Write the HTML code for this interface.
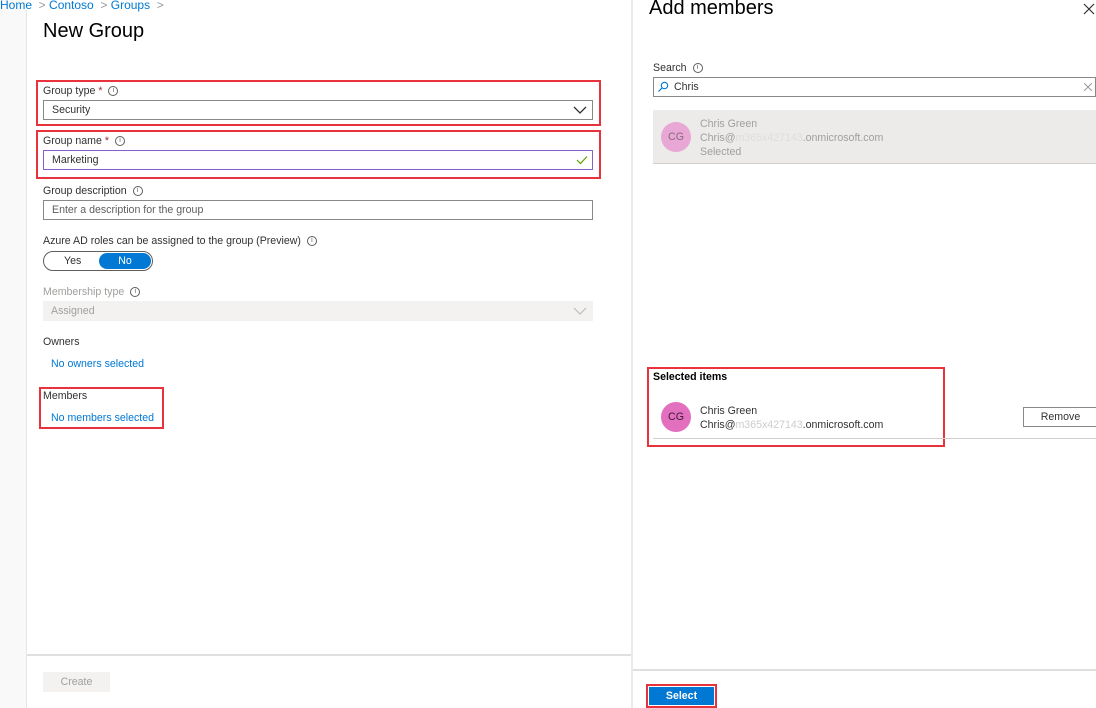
<!DOCTYPE html>
<html><head><meta charset="utf-8"><style>
*{box-sizing:border-box;margin:0;padding:0}
body{width:1096px;height:708px;position:relative;overflow:hidden;background:#fff;font-family:"Liberation Sans",sans-serif;font-size:10.6px;color:#323130}
.a{position:absolute}
.lbl{position:absolute;font-size:10.6px;color:#323130}
.inp{position:absolute;left:43px;width:550px;height:20px;border:1px solid #8a8886;padding:0 8px;line-height:18px;font-size:10.6px}
.red{position:absolute;border:2px solid #e8323c}
.info{display:inline-block;width:10px;height:10px;border:1px solid #605e5c;border-radius:50%;font-size:7px;line-height:8px;text-align:center;vertical-align:middle;margin-left:6px;color:#605e5c}
.link{position:absolute;color:#0078d4;font-size:10.6px}
</style></head><body>
<div class="a" style="left:0;top:0;width:26px;height:708px;background:#f9f9f9"></div>
<div class="a" style="left:26px;top:10px;width:1px;height:698px;background:#e6e6e6"></div>
<div class="a" style="left:0;top:-2px;font-size:12px;color:#0078d4">Home <span style="color:#999">&nbsp;&gt;&nbsp;</span>Contoso <span style="color:#999">&nbsp;&gt;&nbsp;</span>Groups <span style="color:#999">&nbsp;&gt;</span></div>
<div class="a" style="left:43px;top:20px;font-size:20px;color:#000">New Group</div>

<div class="red" style="left:36px;top:80px;width:565px;height:46px"></div>
<div class="lbl" style="left:43px;top:85px">Group type <span style="color:#a4262c">*</span><span class="info">i</span></div>
<div class="inp" style="top:100px">Security</div>
<svg class="a" style="left:573px;top:105px" width="14" height="10"><path d="M1 2 L7 8 L13 2" fill="none" stroke="#323130" stroke-width="1.3"/></svg>

<div class="red" style="left:36px;top:130px;width:565px;height:49px"></div>
<div class="lbl" style="left:43px;top:135px">Group name <span style="color:#a4262c">*</span><span class="info">i</span></div>
<div class="inp" style="top:150px;border-color:#8a5ec9">Marketing</div>
<svg class="a" style="left:576px;top:155px" width="12" height="10"><path d="M1 5 L4.5 8.5 L11 1.5" fill="none" stroke="#57a300" stroke-width="1.2"/></svg>

<div class="lbl" style="left:43px;top:185px">Group description<span class="info">i</span></div>
<div class="inp" style="top:200px;color:#605e5c">Enter a description for the group</div>

<div class="lbl" style="left:43px;top:235px">Azure AD roles can be assigned to the group (Preview)<span class="info">i</span></div>
<div class="a" style="left:43px;top:251px;width:110px;height:20px;border:1px solid #605e5c;border-radius:10px"></div>
<div class="a" style="left:64px;top:255px">Yes</div>
<div class="a" style="left:99px;top:253px;width:52px;height:16px;border-radius:8px;background:#0078d4;color:#fff;text-align:center;line-height:16px">No</div>

<div class="lbl" style="left:43px;top:286px;color:#a19f9d">Membership type<span class="info">i</span></div>
<div class="a" style="left:43px;top:301px;width:550px;height:20px;background:#f3f2f1;color:#a19f9d;padding-left:8px;line-height:20px">Assigned</div>
<svg class="a" style="left:573px;top:306px" width="14" height="10"><path d="M1 2 L7 8 L13 2" fill="none" stroke="#bbb" stroke-width="1.2"/></svg>

<div class="lbl" style="left:43px;top:336px">Owners</div>
<div class="link" style="left:51px;top:358px">No owners selected</div>
<div class="red" style="left:39px;top:387px;width:125px;height:42px"></div>
<div class="lbl" style="left:43px;top:390px">Members</div>
<div class="link" style="left:51px;top:412px">No members selected</div>

<div class="a" style="left:27px;top:654px;width:605px;height:2px;background:#e1dfdd"></div>
<div class="a" style="left:43px;top:672px;width:67px;height:20px;background:#f3f2f1;color:#a19f9d;text-align:center;line-height:20px">Create</div>

<div class="a" style="left:631px;top:0;width:2px;height:708px;background:#eaeaea"></div>
<div class="a" style="left:649px;top:-3px;font-size:20px;color:#000">Add members</div>
<svg class="a" style="left:1083px;top:3px" width="12" height="12"><path d="M1 1 L11 11 M11 1 L1 11" stroke="#323130" stroke-width="1.2"/></svg>
<div class="lbl" style="left:653px;top:62px">Search<span class="info">i</span></div>
<div class="a" style="left:653px;top:77px;width:443px;height:20px;border:1px solid #8a8886;padding-left:20px;line-height:18px">Chris</div>
<svg class="a" style="left:657px;top:81px" width="12" height="12"><circle cx="7.5" cy="4.5" r="3.2" fill="none" stroke="#0078d4" stroke-width="1.1"/><path d="M5 7 L1.5 10.5" stroke="#0078d4" stroke-width="1.2"/></svg>
<svg class="a" style="left:1084px;top:83px" width="8" height="8"><path d="M0 0 L8 8 M8 0 L0 8" stroke="#999" stroke-width="1"/></svg>
<div class="a" style="left:653px;top:110px;width:443px;height:54px;background:#edebe9;border-bottom:1px solid #d2d0ce"></div>
<div class="a" style="left:661px;top:122px;width:30px;height:30px;border-radius:50%;background:#e8a7d4;color:#8a6a80;text-align:center;line-height:30px">CG</div>
<div class="a" style="left:700px;top:117px;color:#a19f9d;line-height:14px">Chris Green<br>Chris@<span style="color:#ddd">m365x427143</span>.onmicrosoft.com<br>Selected</div>

<div class="red" style="left:647px;top:367px;width:298px;height:80px"></div>
<div class="a" style="left:653px;top:371px;font-weight:bold;color:#000">Selected items</div>
<div class="a" style="left:661px;top:402px;width:30px;height:30px;border-radius:50%;background:#e36fbf;color:#3b1a33;text-align:center;line-height:30px">CG</div>
<div class="a" style="left:700px;top:404px;line-height:14px">Chris Green<br>Chris@<span style="color:#ccc">m365x427143</span>.onmicrosoft.com</div>
<div class="a" style="left:1023px;top:407px;width:75px;height:20px;border:1px solid #8a8886;text-align:center;line-height:18px">Remove</div>
<div class="a" style="left:653px;top:438px;width:443px;height:1px;background:#d2d0ce"></div>

<div class="a" style="left:633px;top:669px;width:463px;height:2px;background:#e1dfdd"></div>
<div class="red" style="left:646px;top:684px;width:71px;height:24px"></div>
<div class="a" style="left:649px;top:687px;width:65px;height:18px;background:#0078d4;color:#fff;font-weight:bold;text-align:center;line-height:18px">Select</div>
</body></html>
